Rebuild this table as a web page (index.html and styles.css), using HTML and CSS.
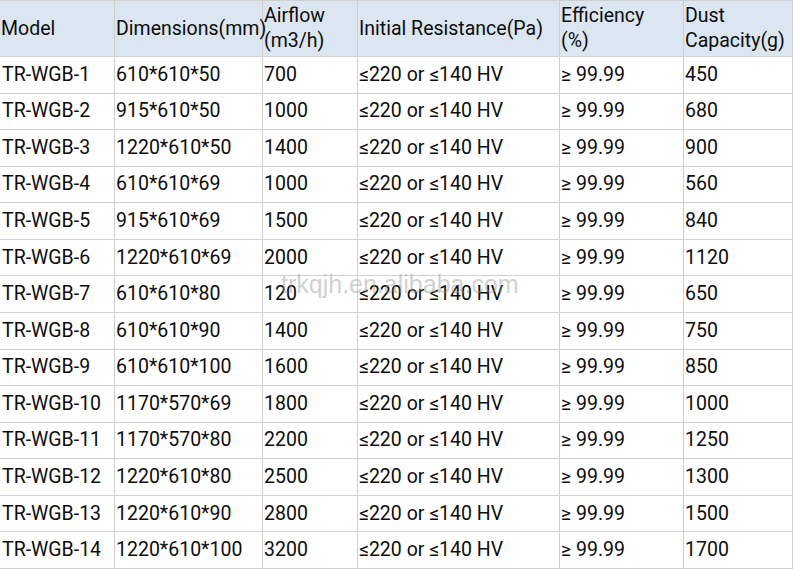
FILE: index.html
```html
<!DOCTYPE html>
<html lang="en">
<head>
<meta charset="utf-8">
<title>TR-WGB Specifications</title>
<link rel="stylesheet" href="styles.css">
</head>
<body>
<div class="sheet">
<table class="spec">
  <colgroup>
    <col class="c-model"><col class="c-dim"><col class="c-air"><col class="c-res"><col class="c-eff"><col class="c-dust">
  </colgroup>
  <thead>
    <tr>
      <th>Model</th>
      <th>Dimensions(mm)</th>
      <th>Airflow<br>(m3/h)</th>
      <th>Initial Resistance(Pa)</th>
      <th>Efficiency<br>(%)</th>
      <th>Dust<br>Capacity(g)</th>
    </tr>
  </thead>
  <tbody>
    <tr><td>TR-WGB-1</td><td>610*610*50</td><td>700</td><td>≤220 or ≤140 HV</td><td>≥ 99.99</td><td>450</td></tr>
    <tr><td>TR-WGB-2</td><td>915*610*50</td><td>1000</td><td>≤220 or ≤140 HV</td><td>≥ 99.99</td><td>680</td></tr>
    <tr><td>TR-WGB-3</td><td>1220*610*50</td><td>1400</td><td>≤220 or ≤140 HV</td><td>≥ 99.99</td><td>900</td></tr>
    <tr><td>TR-WGB-4</td><td>610*610*69</td><td>1000</td><td>≤220 or ≤140 HV</td><td>≥ 99.99</td><td>560</td></tr>
    <tr><td>TR-WGB-5</td><td>915*610*69</td><td>1500</td><td>≤220 or ≤140 HV</td><td>≥ 99.99</td><td>840</td></tr>
    <tr><td>TR-WGB-6</td><td>1220*610*69</td><td>2000</td><td>≤220 or ≤140 HV</td><td>≥ 99.99</td><td>1120</td></tr>
    <tr><td>TR-WGB-7</td><td>610*610*80</td><td>120</td><td>≤220 or ≤140 HV</td><td>≥ 99.99</td><td>650</td></tr>
    <tr><td>TR-WGB-8</td><td>610*610*90</td><td>1400</td><td>≤220 or ≤140 HV</td><td>≥ 99.99</td><td>750</td></tr>
    <tr><td>TR-WGB-9</td><td>610*610*100</td><td>1600</td><td>≤220 or ≤140 HV</td><td>≥ 99.99</td><td>850</td></tr>
    <tr><td>TR-WGB-10</td><td>1170*570*69</td><td>1800</td><td>≤220 or ≤140 HV</td><td>≥ 99.99</td><td>1000</td></tr>
    <tr><td>TR-WGB-11</td><td>1170*570*80</td><td>2200</td><td>≤220 or ≤140 HV</td><td>≥ 99.99</td><td>1250</td></tr>
    <tr><td>TR-WGB-12</td><td>1220*610*80</td><td>2500</td><td>≤220 or ≤140 HV</td><td>≥ 99.99</td><td>1300</td></tr>
    <tr><td>TR-WGB-13</td><td>1220*610*90</td><td>2800</td><td>≤220 or ≤140 HV</td><td>≥ 99.99</td><td>1500</td></tr>
    <tr><td>TR-WGB-14</td><td>1220*610*100</td><td>3200</td><td>≤220 or ≤140 HV</td><td>≥ 99.99</td><td>1700</td></tr>
  </tbody>
</table>
<div class="watermark">trkqjh.en.alibaba.com</div>
</div>
</body>
</html>
```
FILE: styles.css
```css
html, body {
  margin: 0;
  padding: 0;
  background: #ffffff;
}
.sheet {
  position: relative;
  width: 793px;
  height: 569px;
  overflow: hidden;
}
.spec {
  border-collapse: collapse;
  table-layout: fixed;
  width: 793px;
  height: 569px;
  margin-left: -1px;
  font-family: Roboto, Lato, sans-serif;
  font-size: 19.5px;
  color: #0d0d0d;
}
.c-model { width: 115px; }
.c-dim { width: 148px; }
.c-air { width: 95px; }
.c-res { width: 202px; }
.c-eff { width: 124px; }
.c-dust { width: 109px; }
.spec th, .spec td {
  border: 1px solid #cfcfcf;
  padding: 0 0 0 1px;
  text-align: left;
  vertical-align: middle;
  white-space: nowrap;
  overflow: visible;
}
.spec th {
  font-weight: normal;
  background: #dce6f1;
  line-height: 25px;
  height: 54px;
  padding-bottom: 1px;
}
.spec thead tr { height: 55px; }
.spec td { line-height: 22px; }
.spec td:first-child { padding-left: 2px; }
.watermark {
  position: absolute;
  left: 281px;
  top: 270px;
  font-family: "Liberation Sans", Arial, sans-serif;
  font-size: 25px;
  color: rgba(150, 150, 150, 0.45);
  pointer-events: none;
}
```
